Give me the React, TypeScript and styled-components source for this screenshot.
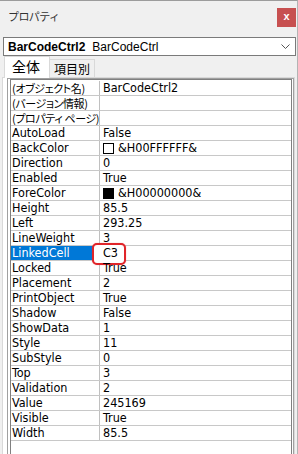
import React from "react";
import styled, { createGlobalStyle } from "styled-components";

const Global = createGlobalStyle`
  html, body { margin: 0; padding: 0; background: #f0f0f0; }
  * { box-sizing: border-box; }
`;

const Window = styled.div`
  width: 298px;
  height: 454px;
  background: #f0f0f0;
  border-top: 1px solid #9c9c9c;
  border-right: 1px solid #b4b4b4;
  overflow: hidden;
  display: flex;
  flex-direction: column;
`;

const TitleBar = styled.div`
  height: 36px;
  flex: none;
  display: flex;
  align-items: flex-start;
  justify-content: space-between;
  padding: 7px 1px 0 8px;
`;

const Title = styled.span`
  font-family: "Noto Sans CJK JP", sans-serif;
  font-size: 11px;
  letter-spacing: -0.6px;
  line-height: 16px;
  color: #333;
`;

const CloseButton = styled.div`
  width: 19px;
  height: 19px;
  background: #c75050;
  color: #fff;
  font-family: "Liberation Sans", sans-serif;
  font-weight: bold;
  font-size: 11px;
  line-height: 17px;
  text-align: center;
`;

const Combo = styled.div`
  flex: none;
  height: 19px;
  margin: 0 1px 0 3px;
  border: 1px solid #7a7a7a;
  background: #fff;
  display: flex;
  align-items: center;
  padding: 0 5px 0 4px;
  font-family: "Liberation Sans", sans-serif;
  font-size: 12px;
  color: #000;
`;

const ComboBold = styled.span`
  font-weight: bold;
  margin-right: 7px;
`;

const ComboText = styled.span`
  flex: 1;
`;

const TabRow = styled.div`
  flex: none;
  display: flex;
  align-items: flex-end;
  padding-left: 4px;
  height: 21px;
  position: relative;
  z-index: 1;
`;

const Tab = styled.div<{ $active?: boolean }>`
  font-family: "Noto Sans CJK JP", sans-serif;
  color: #000;
  border: 1px solid #d9d9d9;
  ${(p) =>
    p.$active
      ? `
    width: 46px;
    height: 22px;
    background: #fff;
    border-bottom: none;
    margin-bottom: -1px;
    font-size: 14px;
    line-height: 19px;
    padding-left: 7px;
  `
      : `
    width: 45px;
    height: 18px;
    background: #f0f0f0;
    border-left: none;
    border-bottom: none;
    font-size: 12px;
    line-height: 17px;
    padding-left: 4px;
  `}
`;

const Panel = styled.div`
  flex: 1;
  margin: 0 2px 0 2px;
  border: 1px solid #d9d9d9;
  border-bottom: none;
  background: #fff;
  padding: 0 0 0 4px;
  display: flex;
  flex-direction: column;
`;

const Frame = styled.div`
  flex: 1;
  border-top: 1px solid #a0a0a0;
  border-left: 1px solid #a0a0a0;
  border-right: 1px solid #a0a0a0;
  padding: 0 1px 0 2px;
  background: #fff;
  display: flex;
  flex-direction: column;
`;

const Inner = styled.div`
  flex: 1;
  border-top: 1px solid #808080;
  border-left: 1px solid #808080;
  border-right: 1px solid #808080;
  padding-top: 1px;
  font-family: "Liberation Sans Narrow", "DejaVu Sans Condensed", "Noto Sans CJK JP", sans-serif;
  font-size: 12.5px;
  color: #000;
`;

const Row = styled.div`
  display: flex;
  height: 15px;
  border-bottom: 1px solid #c8c8c8;
  position: relative;
`;

const NameCell = styled.div<{ $selected?: boolean; $jp?: boolean }>`
  width: 89px;
  height: 14px;
  flex: none;
  border-right: 1px solid #c0c0c0;
  padding-left: 1px;
  line-height: 14px;
  white-space: nowrap;
  overflow: hidden;
  background: ${(p) => (p.$selected ? "#0078d7" : "transparent")};
  color: ${(p) => (p.$selected ? "#fff" : "#000")};
  ${(p) =>
    p.$jp
      ? `
    font-family: "Noto Sans CJK JP", sans-serif;
    font-feature-settings: "palt" 1;
    font-size: 11px;
    letter-spacing: -0.4px;
  `
      : ""}
`;

const ValueCell = styled.div`
  flex: 1;
  height: 14px;
  padding-left: 3px;
  line-height: 14px;
  white-space: nowrap;
  display: flex;
  align-items: center;
  position: relative;
  z-index: 2;
`;

const Swatch = styled.span<{ $color: string }>`
  display: inline-block;
  width: 11px;
  height: 11px;
  border: 1px solid #000;
  background: ${(p) => p.$color};
  margin-right: 4px;
  flex: none;
`;

const Callout = styled.div`
  position: absolute;
  left: 81px;
  top: -3px;
  width: 34px;
  height: 22px;
  border: 2px solid #e0252a;
  border-radius: 5px;
  background: #fff;
  box-shadow: 0 0 1px rgba(224, 37, 42, 0.6);
  z-index: 1;
`;

type Prop = { name: string; value: string; swatch?: string; jp?: boolean };

const props: Prop[] = [
  { name: "(オブジェクト名)", value: "BarCodeCtrl2", jp: true },
  { name: "(バージョン情報)", value: "", jp: true },
  { name: "(プロパティ ページ)", value: "", jp: true },
  { name: "AutoLoad", value: "False" },
  { name: "BackColor", value: "&H00FFFFFF&", swatch: "#fff" },
  { name: "Direction", value: "0" },
  { name: "Enabled", value: "True" },
  { name: "ForeColor", value: "&H00000000&", swatch: "#000" },
  { name: "Height", value: "85.5" },
  { name: "Left", value: "293.25" },
  { name: "LineWeight", value: "3" },
  { name: "LinkedCell", value: "C3" },
  { name: "Locked", value: "True" },
  { name: "Placement", value: "2" },
  { name: "PrintObject", value: "True" },
  { name: "Shadow", value: "False" },
  { name: "ShowData", value: "1" },
  { name: "Style", value: "11" },
  { name: "SubStyle", value: "0" },
  { name: "Top", value: "3" },
  { name: "Validation", value: "2" },
  { name: "Value", value: "245169" },
  { name: "Visible", value: "True" },
  { name: "Width", value: "85.5" },
];

export default function App() {
  return (
    <>
      <Global />
      <Window>
        <TitleBar>
          <Title>プロパティ</Title>
          <CloseButton>x</CloseButton>
        </TitleBar>
        <Combo>
          <ComboBold>BarCodeCtrl2</ComboBold>
          <ComboText>BarCodeCtrl</ComboText>
          <svg width="9" height="6" viewBox="0 0 9 6">
            <polyline points="0.5,0.5 4.5,4.5 8.5,0.5" fill="none" stroke="#555" strokeWidth="1" />
          </svg>
        </Combo>
        <TabRow>
          <Tab $active>全体</Tab>
          <Tab>項目別</Tab>
        </TabRow>
        <Panel>
          <Frame>
            <Inner>
              {props.map((p) => {
                const selected = p.name === "LinkedCell";
                return (
                  <Row key={p.name}>
                    <NameCell $selected={selected} $jp={p.jp}>
                      {p.name}
                    </NameCell>
                    {selected && <Callout />}
                    <ValueCell>
                      {p.swatch && <Swatch $color={p.swatch} />}
                      {p.value}
                    </ValueCell>
                  </Row>
                );
              })}
            </Inner>
          </Frame>
        </Panel>
      </Window>
    </>
  );
}
